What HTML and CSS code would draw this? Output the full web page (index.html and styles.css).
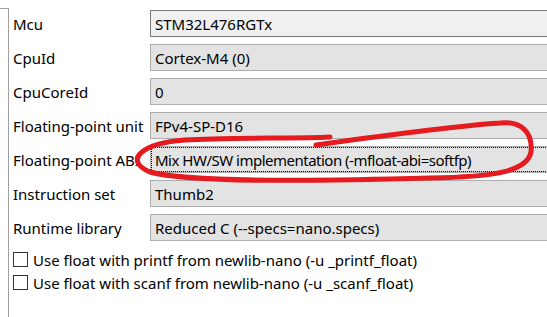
FILE: index.html
```html
<!DOCTYPE html>
<html lang="en">
<head>
    <meta charset="UTF-8">
    <title>MCU Settings</title>
    <link rel="stylesheet" href="styles.css">
</head>
<body>
    <div class="page">
        <div class="side"></div>
        <div class="panel">
            <div class="fields">
                <label class="label">Mcu</label>
                <div class="box box-edit">STM32L476RGTx</div>
                <label class="label">CpuId</label>
                <div class="box">Cortex-M4 (0)</div>
                <label class="label">CpuCoreId</label>
                <div class="box">0</div>
                <label class="label">Floating-point unit</label>
                <div class="box">FPv4-SP-D16</div>
                <label class="label">Floating-point ABI</label>
                <div class="box box-focus">Mix HW/SW implementation (-mfloat-abi=softfp)</div>
                <label class="label">Instruction set</label>
                <div class="box">Thumb2</div>
                <label class="label">Runtime library</label>
                <div class="box">Reduced C (--specs=nano.specs)</div>
            </div>
            <div class="checks">
                <div class="check"><span class="checkbox"></span>Use float with printf from newlib-nano (-u _printf_float)</div>
                <div class="check"><span class="checkbox"></span>Use float with scanf from newlib-nano (-u _scanf_float)</div>
            </div>
        </div>
    </div>

    <svg class="scribble" width="547" height="317" viewBox="0 0 547 317">
        <path d="M330 137 C 295 139, 230 137, 185 140 C 143 143, 122 160, 150 172 C 190 183, 320 181, 430 178 C 492 177, 527 172, 531 152 C 533 131, 520 121, 500 123 C 455 126, 380 136, 316 145"
              fill="none" stroke="#e51b1f" stroke-width="5" stroke-linecap="round" stroke-linejoin="round"/>
    </svg>
</body>
</html>
```

FILE: styles.css
```css
body {
    margin: 0;
    background: #fff;
    font-family: "Noto Sans", "Open Sans", sans-serif;
    font-size: 15px;
    color: #000;
    overflow: hidden;
}

.page {
    display: flex;
    height: 317px;
}

.side {
    width: 8px;
    margin-top: 8px;
    border-top: 1px solid #a0a0a0;
    border-right: 1px solid #a0a0a0;
    flex: none;
}

.panel {
    flex: 1;
    padding: 10px 0 0 4px;
    margin-right: -2px;
}

.fields {
    display: grid;
    grid-template-columns: 137px 1fr;
    grid-auto-rows: 27px;
    row-gap: 7px;
}

.label {
    display: flex;
    align-items: center;
    white-space: nowrap;
}

.box {
    display: flex;
    align-items: center;
    padding-left: 4px;
    background: #e3e3e3;
    border: 1px solid #adadad;
    white-space: nowrap;
}

.box-edit {
    background: #f0f0f0;
    border-color: #7a7a7a;
}

.box-focus {
    outline: 1px dotted #000;
    outline-offset: -2px;
    letter-spacing: -0.5px;
}

.checks {
    margin-top: 7px;
}

.check {
    display: flex;
    align-items: center;
    height: 23px;
    white-space: nowrap;
}

.checkbox {
    width: 13px;
    height: 13px;
    border: 1px solid #333;
    background: #fff;
    margin-right: 5px;
    flex: none;
}

.scribble {
    position: absolute;
    left: 0;
    top: 0;
    pointer-events: none;
}
```
